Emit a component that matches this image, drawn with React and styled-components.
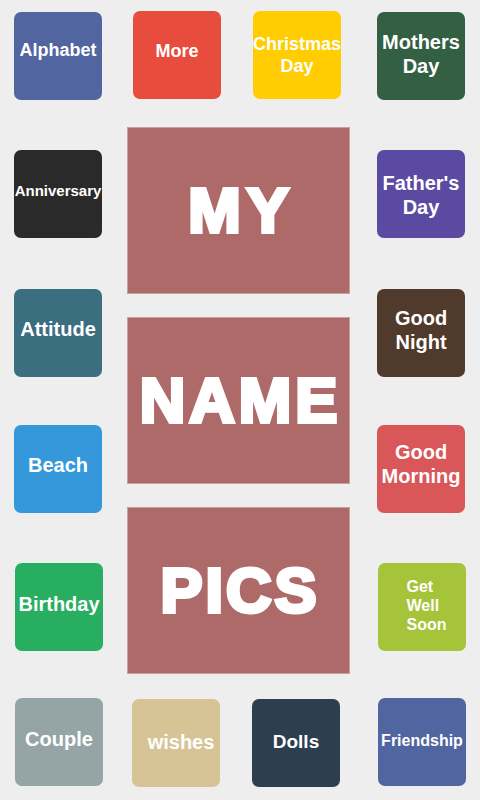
import React from "react";
import styled, { createGlobalStyle } from "styled-components";

const GlobalStyle = createGlobalStyle`
  html, body { margin: 0; padding: 0; background: #eeeeee; }
  body { font-family: "Liberation Sans", Arial, sans-serif; }
`;

const Page = styled.div`
  width: 480px;
  height: 800px;
  background: #eeeeee;
  display: flex;
  flex-direction: column;
  overflow: hidden;
`;

const Row = styled.div`
  display: flex;
  align-items: flex-start;
  height: ${(p) => p.$h}px;
  flex: none;
`;

const Column = styled.div`
  display: flex;
  flex-direction: column;
  align-items: flex-start;
  margin-left: ${(p) => p.$ml}px;
  gap: ${(p) => p.$gap || 0}px;
`;

const Tile = styled.div`
  box-sizing: border-box;
  width: 88px;
  height: 88px;
  flex: none;
  margin-left: ${(p) => p.$ml || 0}px;
  margin-top: ${(p) => p.$mt || 0}px;
  border-radius: 7px;
  background: ${(p) => p.$bg};
  display: flex;
  align-items: center;
  justify-content: center;
  padding-top: ${(p) => (p.$shift > 0 ? p.$shift * 2 : 0)}px;
  padding-bottom: ${(p) => (p.$shift < 0 ? -p.$shift * 2 : 0)}px;
  padding-left: ${(p) => p.$px || 0}px;
  color: #ffffff;
  font-family: "Liberation Sans", Arial, sans-serif;
  font-weight: 700;
  font-size: ${(p) => p.$fs}px;
  line-height: ${(p) => p.$lh || p.$fs * 1.2}px;
  text-align: ${(p) => p.$align || "center"};
  white-space: pre;
`;

const Banner = styled.div`
  box-sizing: border-box;
  width: 223px;
  height: 167px;
  background: #ad6a68;
  border: 1px solid #c9a0a0;
  display: flex;
  align-items: center;
  justify-content: center;
  padding-left: ${(p) => p.$ls}px;
  color: #ffffff;
  font-family: "Liberation Sans", Arial, sans-serif;
  font-weight: 700;
  font-size: 63px;
  -webkit-text-stroke: 4px #ffffff;
  paint-order: stroke fill;
  letter-spacing: ${(p) => p.$ls}px;
  line-height: 1;
`;

const topRow = [
  { label: "Alphabet", bg: "#5165a0", fs: 18, ml: 14, mt: 12, shift: -5.5 },
  { label: "More", bg: "#e74c3c", fs: 18, ml: 31, mt: 11, shift: -3.7 },
  { label: "Christmas\nDay", bg: "#ffcd02", fs: 18, lh: 22, ml: 32, mt: 11, shift: 0 },
  { label: "Mothers\nDay", bg: "#336042", fs: 20, lh: 24.5, ml: 36, mt: 12, shift: -2 },
];

const leftCol = [
  { label: "Anniversary", bg: "#2a2a2a", fs: 15, mt: 23, shift: -2.7 },
  { label: "Attitude", bg: "#3b6e7f", fs: 20, mt: 51, shift: -3.8 },
  { label: "Beach", bg: "#3598db", fs: 20, mt: 48, shift: -4 },
  { label: "Birthday", bg: "#28ae60", fs: 20, mt: 50, ml: 1, shift: -3.3 },
];

const rightCol = [
  { label: "Father's\nDay", bg: "#5b4aa2", fs: 20, lh: 24.5, mt: 23, shift: 1.3 },
  { label: "Good\nNight", bg: "#503a2c", fs: 20, lh: 24, mt: 51, shift: -3 },
  { label: "Good\nMorning", bg: "#d95659", fs: 20, lh: 24, mt: 48, shift: -5.3 },
  { label: "Get\nWell\nSoon", bg: "#a5c43a", fs: 16, lh: 19, mt: 50, ml: 1, shift: -1.5, align: "left", px: 9 },
];

const bottomRow = [
  { label: "Couple", bg: "#95a5a5", fs: 20, ml: 15, mt: 24, shift: -2.7 },
  { label: "wishes", bg: "#d6c496", fs: 20, ml: 29, mt: 25, shift: -1.2, px: 10 },
  { label: "Dolls", bg: "#2d3e50", fs: 19, ml: 32, mt: 25, shift: -0.8 },
  { label: "Friendship", bg: "#5165a0", fs: 16, ml: 38, mt: 24, shift: -1 },
];

const banners = [
  { text: "MY", ls: 6 },
  { text: "NAME", ls: 4 },
  { text: "PICS", ls: 3 },
];

function renderTile(t) {
  return (
    <Tile
      key={t.label}
      $bg={t.bg}
      $fs={t.fs}
      $lh={t.lh}
      $ml={t.ml}
      $mt={t.mt}
      $shift={t.shift}
      $align={t.align}
      $px={t.px}
    >
      {t.label}
    </Tile>
  );
}

export default function App() {
  return (
    <>
      <GlobalStyle />
      <Page>
        <Row $h={127}>{topRow.map(renderTile)}</Row>
        <Row $h={547}>
          <Column $ml={14}>{leftCol.map(renderTile)}</Column>
          <Column $ml={24} $gap={23}>
            {banners.map((b) => (
              <Banner key={b.text} $ls={b.ls}>
                {b.text}
              </Banner>
            ))}
          </Column>
          <Column $ml={27}>{rightCol.map(renderTile)}</Column>
        </Row>
        <Row $h={126}>{bottomRow.map(renderTile)}</Row>
      </Page>
    </>
  );
}
